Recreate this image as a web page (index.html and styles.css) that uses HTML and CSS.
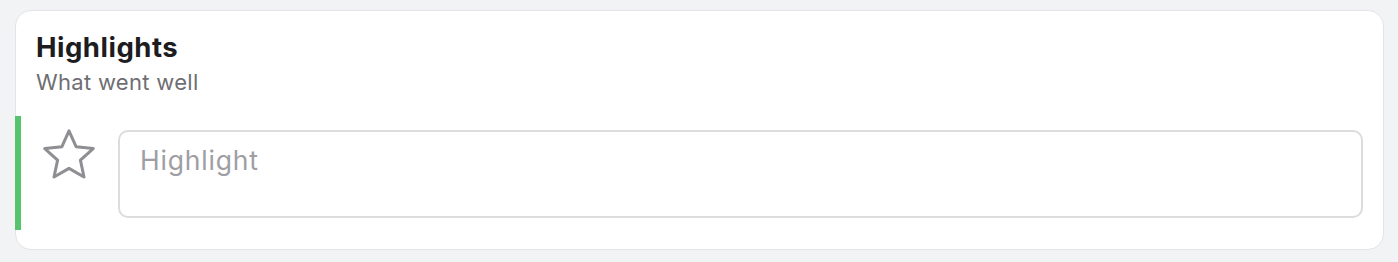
FILE: index.html
```html
<!DOCTYPE html>
<html lang="en">
<head>
<meta charset="utf-8">
<title>Highlights</title>
<link rel="stylesheet" href="styles.css">
</head>
<body>
<section class="card">
  <header class="card-header">
    <h2 class="card-title">Highlights</h2>
    <p class="card-subtitle">What went well</p>
  </header>
  <div class="entry">
    <svg class="entry-icon" width="56" height="54" viewBox="0 0 56 54" aria-hidden="true">
      <polygon points="28,1.9 35.05,17.69 52.25,19.52 39.41,31.11 42.99,48.03 28,39.4 13.01,48.03 16.59,31.11 3.75,19.52 20.95,17.69" fill="none" stroke="#8e8e93" stroke-width="3" stroke-linejoin="round"/>
    </svg>
    <textarea class="entry-input" placeholder="Highlight"></textarea>
  </div>
</section>
</body>
</html>
```

FILE: styles.css
```css
* { box-sizing: border-box; }

html, body {
  margin: 0;
  padding: 0;
  background: #f2f3f5;
}

body {
  padding: 10px 14px 12px 15px;
  font-family: Inter, "Noto Sans", sans-serif;
}

.card {
  background: #ffffff;
  border: 1px solid #e4e4e8;
  border-radius: 16px;
  padding: 20px 0 19px 0;
}

.card-header {
  padding: 0 20px;
}

.card-title {
  margin: 0;
  font-size: 27.5px;
  line-height: 33px;
  font-weight: 700;
  letter-spacing: 0.5px;
  color: #1d1d1f;
}

.card-subtitle {
  margin: 4px 0 0 0;
  font-size: 22px;
  line-height: 28px;
  font-weight: 400;
  letter-spacing: 0.3px;
  color: #6e6e73;
}

.entry {
  margin-top: 20px;
  margin-left: -1px;
  display: flex;
  align-items: flex-start;
  border-left: 6px solid #55c46c;
  padding: 14px 20px 12px 20px;
}

.entry-icon {
  flex: none;
  margin-top: -1px;
  margin-right: 21px;
  display: block;
}

.entry-input {
  flex: 1;
  height: 88px;
  border: 2px solid #dcdcdf;
  border-radius: 10px;
  padding: 12px 20px;
  font-family: Inter, "Noto Sans", sans-serif;
  font-size: 26.5px;
  line-height: 32px;
  letter-spacing: 0.8px;
  color: #1d1d1f;
  resize: none;
  outline: none;
  background: #ffffff;
  display: block;
}

.entry-input::placeholder {
  color: #9e9ea4;
  opacity: 1;
}
```
